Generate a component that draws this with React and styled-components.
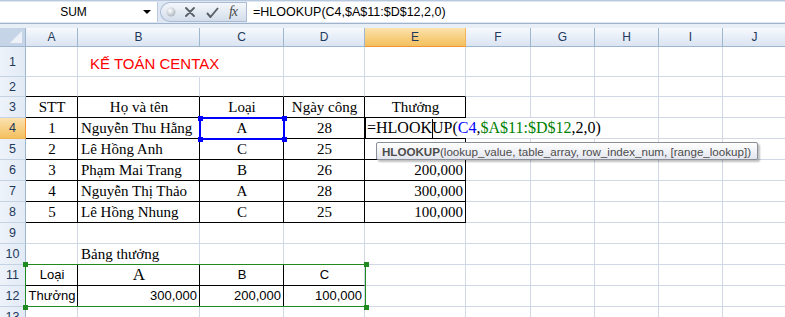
import React from 'react';
import styled, { createGlobalStyle } from 'styled-components';

const GlobalStyle = createGlobalStyle`
  html, body {
    margin: 0;
    padding: 0;
    background: #fff;
  }
  body {
    font-family: 'Liberation Sans', Arial, sans-serif;
  }
`;

const GRID = '#d0d7e5';
const BLACK = '#000';
// row header, then A..J
const COLS = [26, 52, 122, 84, 81, 101, 65, 64, 64, 64, 64];
const LETTERS = ['', 'A', 'B', 'C', 'D', 'E', 'F', 'G', 'H', 'I', 'J'];
const ROWS = [30, 20, 21, 21, 21, 21, 21, 21, 21, 21, 21, 21, 21];

const Window = styled.div`
  width: 785px;
  height: 317px;
  overflow: hidden;
  background: #fff;
  display: flex;
  flex-direction: column;
`;

const FormulaBar = styled.div`
  height: 24px;
  flex: none;
  display: flex;
  align-items: stretch;
  background: #dfe7f2;
  border-top: 1px solid #b9c9dd;
  border-bottom: 1px solid #9fb3cc;
  box-sizing: border-box;
`;

const NameBox = styled.div`
  width: 158px;
  margin: 1px 0;
  background: #fff;
  display: flex;
  align-items: center;
  font-size: 12px;
  color: #000;
  border-right: 1px solid #b9c9dd;
  box-sizing: border-box;
`;

const NameText = styled.span`
  flex: 1;
  text-align: center;
  padding-left: 4px;
`;

const DropArrow = styled.span`
  width: 0;
  height: 0;
  border-left: 4px solid transparent;
  border-right: 4px solid transparent;
  border-top: 4px solid #000;
  margin-right: 6px;
`;

const Pill = styled.div`
  width: 86px;
  margin: 1px 0 1px 2px;
  border-radius: 11px 0 0 11px;
  background: linear-gradient(#f4f7fb, #d3ddea);
  border: 1px solid #a9bcd4;
  border-right: none;
  box-sizing: border-box;
  display: flex;
  align-items: center;
  padding-left: 3px;
`;

const PillIcon = styled.span`
  width: ${p => p.$w}px;
  display: flex;
  justify-content: center;
  align-items: center;
`;

const Fx = styled.span`
  font-family: 'Liberation Serif', serif;
  font-style: italic;
  font-size: 14px;
  color: #4a4a4a;
  letter-spacing: -1px;
`;

const FormulaInput = styled.div`
  flex: 1;
  margin: 1px 0;
  background: #fff;
  border-left: 1px solid #a9bcd4;
  display: flex;
  align-items: center;
  padding-left: 6px;
  font-size: 12.5px;
  color: #000;
`;

const Gap = styled.div`
  height: 4px;
  flex: none;
  background: #e9eff7;
`;

const Sheet = styled.div`
  position: relative;
  display: grid;
  grid-template-columns: ${COLS.map(c => c + 'px').join(' ')};
  grid-template-rows: 19px ${ROWS.map(r => r + 'px').join(' ')};
`;

const ColHead = styled.div`
  box-sizing: border-box;
  display: flex;
  align-items: center;
  justify-content: center;
  font-size: 12px;
  color: #1e395b;
  border-right: 1px solid ${p => (p.$sel ? '#f0b558' : '#9eb6ce')};
  border-bottom: 1px solid ${p => (p.$sel ? '#f29536' : '#9eb6ce')};
  background: ${p =>
    p.$sel
      ? 'linear-gradient(#fbe2b0, #f7cf7e 55%, #f4c05f)'
      : 'linear-gradient(#f7f9fd, #e6edf7 55%, #dbe4f1)'};
`;

const Corner = styled.div`
  box-sizing: border-box;
  background: #c6d4e7;
  border-right: 1px solid #9eb6ce;
  border-bottom: 1px solid #9eb6ce;
  position: relative;
  &::after {
    content: '';
    position: absolute;
    right: 3px;
    bottom: 3px;
    border-left: 12px solid transparent;
    border-bottom: 12px solid #eef2f8;
  }
`;

const RowHead = styled.div`
  box-sizing: border-box;
  display: flex;
  align-items: center;
  justify-content: center;
  font-size: 12.5px;
  color: #1e395b;
  border-right: 1px solid ${p => (p.$sel ? '#f29536' : '#9eb6ce')};
  border-bottom: 1px solid ${p => (p.$sel ? '#f0b558' : '#c5d2e3')};
  background: ${p =>
    p.$sel ? 'linear-gradient(#fbe2b0, #f4c05f)' : 'linear-gradient(90deg, #eef3fa, #e2eaf5)'};
`;

const Cell = styled.div`
  box-sizing: border-box;
  display: flex;
  align-items: flex-end;
  justify-content: ${p => p.$align};
  padding: 0 2px 0 3px;
  border-right: 1px solid ${p => p.$right};
  border-bottom: 1px solid ${p => p.$bottom};
  white-space: nowrap;
  overflow: ${p => (p.$spill ? 'visible' : 'hidden')};
  position: relative;
  z-index: ${p => (p.$spill ? 1 : 0)};
  font-family: ${p =>
    p.$font === 'sans'
      ? "'Liberation Sans', Arial, sans-serif"
      : "'Liberation Serif', 'Times New Roman', serif"};
  font-size: ${p => p.$size}px;
  color: #000;
  line-height: 20px;
`;

const Title = styled.span`
  font-family: 'Liberation Sans', Arial, sans-serif;
  font-size: 15px;
  color: #ff0000;
  padding-left: 9px;
  padding-bottom: 3px;
  line-height: 18px;
`;

const RefBox = styled.div`
  position: absolute;
  left: ${p => p.$x}px;
  top: ${p => p.$y}px;
  width: ${p => p.$w}px;
  height: ${p => p.$h}px;
  box-sizing: border-box;
  border: ${p => p.$t}px solid ${p => p.$c};
  z-index: 3;
  pointer-events: none;
`;

const Handle = styled.span`
  position: absolute;
  width: 5px;
  height: 5px;
  background: ${p => p.$c};
  ${p => (p.$top ? 'top: -3.5px;' : 'bottom: -3.5px;')}
  ${p => (p.$left ? 'left: -3.5px;' : 'right: -3.5px;')}
`;

const EditCell = styled.div`
  position: absolute;
  left: 364px;
  top: 90px;
  width: 236px;
  height: 20px;
  background: #fff;
  border-left: 2px solid #000;
  box-sizing: border-box;
  z-index: 4;
  display: flex;
  align-items: center;
  padding-left: 1px;
  font-family: 'Liberation Serif', 'Times New Roman', serif;
  font-size: 16px;
  color: #000;
  white-space: nowrap;
`;

const Caret = styled.span`
  display: inline-block;
  width: 0;
  height: 19px;
  border-left: 1px solid #000;
  margin: 0 -0.5px;
`;

const Ref = styled.span`
  color: ${p => p.$c};
`;

const Tooltip = styled.div`
  position: absolute;
  left: 376px;
  top: 114px;
  width: 382px;
  height: 18px;
  box-sizing: border-box;
  border: 1px solid #8a8f99;
  border-radius: 2px;
  background: linear-gradient(#ffffff, #e4e6ee);
  box-shadow: 2px 2px 2px rgba(0, 0, 0, 0.25);
  z-index: 5;
  display: flex;
  align-items: center;
  padding-left: 5px;
  font-family: 'Liberation Sans', Arial, sans-serif;
  font-size: 11.6px;
  color: #4c4c4c;
  white-space: nowrap;
`;

const Bold = styled.b`
  font-weight: 700;
`;

const serif = { font: 'serif', size: 15 };
const sans = { font: 'sans', size: 13 };

const DATA = {
  A3: ['STT', 'center'], B3: ['Họ và tên', 'center'], C3: ['Loại', 'center'], D3: ['Ngày công', 'center'], E3: ['Thưởng', 'center'],
  A4: ['1', 'center'], B4: ['Nguyễn Thu Hằng'], C4: ['A', 'center'], D4: ['28', 'center'],
  A5: ['2', 'center'], B5: ['Lê Hồng Anh'], C5: ['C', 'center'], D5: ['25', 'center'], E5: ['100,000', 'flex-end'],
  A6: ['3', 'center'], B6: ['Phạm Mai Trang'], C6: ['B', 'center'], D6: ['26', 'center'], E6: ['200,000', 'flex-end'],
  A7: ['4', 'center'], B7: ['Nguyễn Thị Thảo'], C7: ['A', 'center'], D7: ['28', 'center'], E7: ['300,000', 'flex-end'],
  A8: ['5', 'center'], B8: ['Lê Hồng Nhung'], C8: ['C', 'center'], D8: ['25', 'center'], E8: ['100,000', 'flex-end'],
  B10: ['Bảng thưởng'],
  A11: ['Loại', 'center', sans], B11: ['A', 'center', { font: 'serif', size: 17 }], C11: ['B', 'center', sans], D11: ['C', 'center', sans],
  A12: ['Thưởng', 'center', sans], B12: ['300,000', 'flex-end', sans], C12: ['200,000', 'flex-end', sans], D12: ['100,000', 'flex-end', sans],
};

function borders(r, c) {
  let right = GRID;
  let bottom = GRID;
  if (r >= 3 && r <= 8 && c >= 1 && c <= 5) right = BLACK;
  if (r >= 2 && r <= 8 && c >= 1 && c <= 5) bottom = BLACK;
  if (r >= 11 && r <= 12 && c >= 1 && c <= 3) right = BLACK;
  if (r === 11 && c >= 1 && c <= 4) bottom = BLACK;
  if (r === 1 && c === 2) right = '#fff';
  return { right, bottom };
}

function SheetCell({ r, c }) {
  const key = LETTERS[c] + r;
  const { right, bottom } = borders(r, c);
  if (key === 'B1') {
    return (
      <Cell $right={right} $bottom={bottom} $align="flex-start" $spill $font="sans" $size={15}>
        <Title>KẾ TOÁN CENTAX</Title>
      </Cell>
    );
  }
  const d = DATA[key];
  const f = (d && d[2]) || serif;
  return (
    <Cell $right={right} $bottom={bottom} $align={(d && d[1]) || 'flex-start'} $font={f.font} $size={f.size}>
      {d ? d[0] : ''}
    </Cell>
  );
}

function Handles({ c }) {
  return (
    <>
      <Handle $c={c} $top $left />
      <Handle $c={c} $top />
      <Handle $c={c} $left />
      <Handle $c={c} />
    </>
  );
}

export default function App() {
  const rows = ROWS.map((_, i) => i + 1);
  return (
    <>
      <GlobalStyle />
      <Window>
        <FormulaBar>
          <NameBox>
            <NameText>SUM</NameText>
            <DropArrow />
          </NameBox>
          <Pill>
            <PillIcon $w={14}>
              <svg width="10" height="10" viewBox="0 0 10 10">
                <defs>
                  <radialGradient id="ball" cx="0.4" cy="0.35" r="0.7">
                    <stop offset="0" stopColor="#ffffff" />
                    <stop offset="1" stopColor="#aab2bd" />
                  </radialGradient>
                </defs>
                <circle cx="5" cy="5" r="4.5" fill="url(#ball)" />
              </svg>
            </PillIcon>
            <PillIcon $w={24}>
              <svg width="10" height="10" viewBox="0 0 10 10">
                <path d="M1 1 L9 9 M9 1 L1 9" stroke="#5a5f66" strokeWidth="1.8" strokeLinecap="round" />
              </svg>
            </PillIcon>
            <PillIcon $w={20}>
              <svg width="13" height="11" viewBox="0 0 13 11">
                <path d="M1 6 L4.5 10 L12 1" stroke="#5a5f66" strokeWidth="1.9" fill="none" strokeLinejoin="round" />
              </svg>
            </PillIcon>
            <PillIcon $w={22}>
              <Fx>fx</Fx>
            </PillIcon>
          </Pill>
          <FormulaInput>=HLOOKUP(C4,$A$11:$D$12,2,0)</FormulaInput>
        </FormulaBar>
        <Gap />
        <Sheet>
          <Corner />
          {LETTERS.slice(1).map(l => (
            <ColHead key={l} $sel={l === 'E'}>{l}</ColHead>
          ))}
          {rows.map(r => (
            <React.Fragment key={r}>
              <RowHead $sel={r === 4}>{r}</RowHead>
              {LETTERS.slice(1).map((_, i) => (
                <SheetCell key={i} r={r} c={i + 1} />
              ))}
            </React.Fragment>
          ))}

          <RefBox $x={199} $y={89} $w={86} $h={23} $t={2} $c="#0000ff">
            <Handles c="#0000ff" />
          </RefBox>
          <RefBox $x={25} $y={236} $w={341} $h={43} $t={1.5} $c="#1f8a1f">
            <Handles c="#1f8a1f" />
          </RefBox>

          <EditCell>
            =HLOOK<Caret />UP(<Ref $c="#0000ff">C4</Ref>,<Ref $c="#008000">$A$11:$D$12</Ref>,2,0)
          </EditCell>

          <Tooltip>
            <Bold>HLOOKUP</Bold>(lookup_value, table_array, row_index_num, [range_lookup])
          </Tooltip>
        </Sheet>
      </Window>
    </>
  );
}
